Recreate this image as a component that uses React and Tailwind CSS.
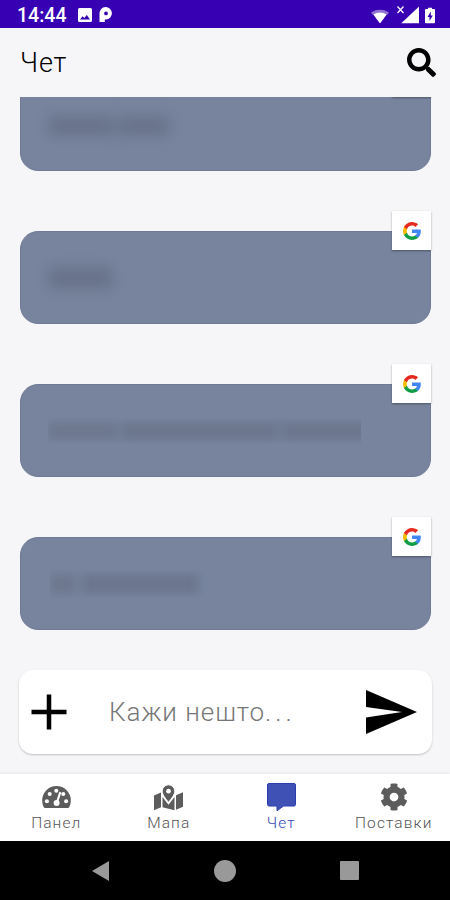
import React from "react";
import { FaSearch, FaCog } from "react-icons/fa";

function GoogleLogo() {
  return (
    <svg viewBox="0 0 48 48" className="h-[18px] w-[18px]">
      <path fill="#4285f4" d="M47.5 24.6c0-1.6-.2-3.2-.5-4.6H24v9.1h13.2c-.6 3-2.3 5.500-4.900 7.200v6h7.900c4.600-4.300 7.300-10.500 7.300-17.700z" />
      <path fill="#109d46" d="M24 48c6.500 0 12-2.100 16-5.800l-7.900-6c-2.200 1.500-4.900 2.300-8.100 2.300-6.300 0-11.500-4.200-13.400-9.900H2.500v6.200C6.500 42.600 14.600 48 24 48z" />
      <path fill="#fbbc05" d="M10.600 28.600c-.5-1.500-.8-3-.8-4.600s.3-3.200.8-4.600v-6.200H2.500C.9 16.500 0 20.100 0 24s.9 7.500 2.500 10.800z" />
      <path fill="#e52b20" d="M24 9.500c3.500 0 6.700 1.200 9.200 3.600l6.900-6.900C35.900 2.400 30.500 0 24 0 14.600 0 6.500 5.400 2.500 13.200l8.100 6.200C12.500 13.700 17.700 9.500 24 9.500z" />
    </svg>
  );
}

function GaugeIcon() {
  return (
    <svg viewBox="0 0 29 29" className="h-[29px] w-[29px]">
      <path fill="currentColor" d="M14.500 2A14.300 14.300 0 0 0 .2 16.300c0 2.700.6 5 1.600 6.900.3.500.7.700 1.200.7h23c.5 0 .9-.2 1.200-.7 1-1.900 1.600-4.200 1.600-6.900A14.300 14.300 0 0 0 14.500 2z" />
      <circle cx="4.900" cy="17.300" r="2.050" fill="#fff" />
      <circle cx="7.700" cy="10" r="2.050" fill="#fff" />
      <circle cx="14.300" cy="6.800" r="2.050" fill="#fff" />
      <circle cx="21.300" cy="10" r="2.050" fill="#fff" />
      <circle cx="24.100" cy="17.300" r="2.050" fill="#fff" />
      <path stroke="#fff" strokeWidth="2.200" strokeLinecap="round" d="M18 9l-3.200 10" />
      <circle cx="14.600" cy="19" r="3" fill="#fff" />
    </svg>
  );
}

function MapIcon() {
  return (
    <svg viewBox="0 0 29 29" className="h-[29px] w-[29px]">
      <path fill="currentColor" d="M0 11.500L7 8.500V23.300L0 26.300zM22 11.300L29 8.300V22.800L22 25.800zM8.500 13L14.500 20.800 20.500 13V26.200L8.500 23.200z" />
      <path fill="currentColor" stroke="#fff" strokeWidth="1" d="M14.500 18.400C11.400 14.400 8.200 10.700 8.200 7.100a6.300 6.300 0 0 1 12.600 0c0 3.600-3.200 7.300-6.300 11.300z" />
      <circle cx="14.500" cy="7.200" r="2.400" fill="#fff" />
    </svg>
  );
}

function ChatIcon() {
  return (
    <svg viewBox="0 0 29 29" className="h-[29px] w-[29px] -translate-y-px">
      <path fill="#3f51b5" stroke="#2a3db0" d="M2 .5h25A1.500 1.500 0 0 1 28.500 2v19.500A1.500 1.500 0 0 1 27 23H16.500L10 27.800V23H2A1.500 1.500 0 0 1 .5 21.500V2A1.500 1.500 0 0 1 2 .5z" />
    </svg>
  );
}

function StatusBar() {
  return (
    <div className="flex h-7 shrink-0 items-center justify-between bg-[#3700b3] pr-[15px] pl-[17px] pt-[3px] text-white">
      <div className="flex items-center">
        <span className="w-[50px] text-[19.500px] leading-6 font-medium">14:44</span>
        <svg viewBox="0 0 14 14" className="ml-[11px] h-[14px] w-[14px] -translate-y-px">
          <path fill="currentColor" fillRule="evenodd" d="M1.500 0h11A1.500 1.500 0 0 1 14 1.500v11a1.500 1.500 0 0 1-1.500 1.500h-11A1.500 1.500 0 0 1 0 12.500v-11A1.500 1.500 0 0 1 1.500 0zM2 11.500h10L8.800 7 6.300 10 4.600 8.200z" />
        </svg>
        <svg viewBox="0 0 13 15" className="ml-[7px] h-[15px] w-[13px] -translate-y-px">
          <path fill="currentColor" fillRule="evenodd" d="M.5 15V6.500A6.200 6.200 0 1 1 7 12.500H5.800V15zM7 4.500A1.900 1.900 0 1 0 7 8.300 1.900 1.900 0 0 0 7 4.500z" />
        </svg>
      </div>
      <div className="flex -translate-y-[1.500px] items-end">
        <svg viewBox="0 0 18 14" className="h-[14px] w-[18px]">
          <path fill="currentColor" opacity=".45" d="M0 3Q9-3 18 3L16 5.500H2z" />
          <path fill="currentColor" d="M2.300 5Q9 1.200 15.700 5L9 14z" />
        </svg>
        <svg viewBox="0 0 22 18" className="ml-[8px] h-[18px] w-[22px]">
          <path fill="currentColor" d="M22 1v17H4z" />
          <path stroke="currentColor" strokeWidth="1.300" d="M.5 1l6 6.500M6.500 1l-6 6.500" />
        </svg>
        <svg viewBox="0 0 10 16" className="ml-[6px] h-4 w-[10px]">
          <path fill="currentColor" fillRule="evenodd" d="M3 0h4v1.500h2a1 1 0 0 1 1 1V15a1 1 0 0 1-1 1H1a1 1 0 0 1-1-1V2.500a1 1 0 0 1 1-1h2zM5.800 4L2.500 9.500h2V13.500L7.800 8h-2z" />
        </svg>
      </div>
    </div>
  );
}

function Message({ children }) {
  return (
    <div className="relative flex h-[93px] shrink-0 items-center rounded-[18px] border border-[#6f7b96] bg-[#78849e] pl-[27px]">
      <div className="flex h-8 items-center">{children}</div>
      <div className="absolute -top-[21px] -right-[1px] flex h-[39px] w-[39px] items-center justify-center bg-white shadow-[0_1px_2px_rgba(0,0,0,0.35)]">
        <GoogleLogo />
      </div>
    </div>
  );
}

function Tab({ icon, label, active }) {
  return (
    <div className={`flex flex-1 flex-col items-center pt-[9px] ${active ? "text-[#3f51b5]" : "text-[#5c5c5c]"}`}>
      <div className="flex h-[30px] items-center justify-center">{icon}</div>
      <span className={`text-[15.500px] leading-5 font-light tracking-[1.100px] whitespace-nowrap ${active ? "text-[#3346b3]" : "text-[#555]"}`}>{label}</span>
    </div>
  );
}

export default function App() {
  return (
    <div className="flex h-[900px] w-[450px] flex-col overflow-hidden bg-[#f6f6f9] font-[Roboto,sans-serif]">
      <StatusBar />
      <header className="flex h-[69px] shrink-0 items-center justify-between pr-[14px] pl-5">
        <h1 className="text-[27px] leading-8 font-light tracking-[0.900px] text-black">Чет</h1>
        <FaSearch className="h-[29px] w-[29px] text-black" />
      </header>

      <main className="flex h-[573px] shrink-0 flex-col justify-end gap-[60px] overflow-hidden pr-[19px] pb-10 pl-5">
        <Message>
          <div className="flex translate-y-px gap-1 blur-[7px]">
            <div className="h-5 w-[66px] bg-[#68738a]" />
            <div className="h-5 w-[52px] bg-[#68738a]" />
          </div>
        </Message>
        <Message>
          <div className="h-[22px] w-[65px] bg-[#68738a] blur-[7px]" />
        </Message>
        <Message>
          <div className="flex h-[25px] w-[313px] items-center overflow-hidden">
            <div className="flex shrink-0 gap-1 blur-[5px]">
              <div className="h-[18px] w-[70px] bg-[#6d788f]" />
              <div className="h-[18px] w-[156px] bg-[#6b768d]" />
              <div className="h-[18px] w-[100px] bg-[#6b768d]" />
            </div>
          </div>
        </Message>
        <Message>
          <div className="ml-0.5 flex h-[28px] w-[160px] items-center overflow-hidden">
            <div className="flex gap-1.5 blur-[5px]">
              <div className="h-5 w-[26px] bg-[#6d788f]" />
              <div className="h-5 w-[116px] bg-[#6b768d]" />
            </div>
          </div>
        </Message>
      </main>

      <div className="mr-[18px] mb-5 ml-[19px] flex h-[84px] shrink-0 items-center rounded-[14px] bg-white pr-[15px] pl-3 shadow-[0_1px_2px_rgba(0,0,0,0.22)]">
        <svg viewBox="0 0 36 36" className="h-9 w-9">
          <path stroke="#000" strokeWidth="4.500" d="M18 0.500v35M.5 18h35" />
        </svg>
        <span className="ml-[42px] flex-1 text-[26px] leading-8 font-light tracking-[0.950px] whitespace-nowrap text-[#777]">
          Кажи нешто<span className="tracking-[4px]">...</span>
        </span>
        <svg viewBox="0 0 51 44" className="h-11 w-[51px]">
          <path fill="#000" d="M0 0L51 22 0 44V27.500L36 22 0 17z" />
        </svg>
      </div>

      <nav className="flex h-[67px] shrink-0 bg-white shadow-[0_-1px_3px_rgba(0,0,0,0.06)]">
        <Tab icon={<GaugeIcon />} label="Панел" />
        <Tab icon={<MapIcon />} label="Мапа" />
        <Tab active icon={<ChatIcon />} label="Чет" />
        <Tab icon={<FaCog className="h-7 w-7 -translate-y-px" />} label="Поставки" />
      </nav>

      <div className="flex h-[59px] shrink-0 items-center bg-black pl-[92px]">
        <svg viewBox="0 0 17 20" className="h-5 w-[17px]"><path fill="#999" d="M17 0v20L0 10z" /></svg>
        <div className="ml-[105px] h-[22px] w-[22px] rounded-full bg-[#999]" />
        <div className="ml-[104px] h-[19px] w-[19px] rounded-[1px] bg-[#999]" />
      </div>
    </div>
  );
}
